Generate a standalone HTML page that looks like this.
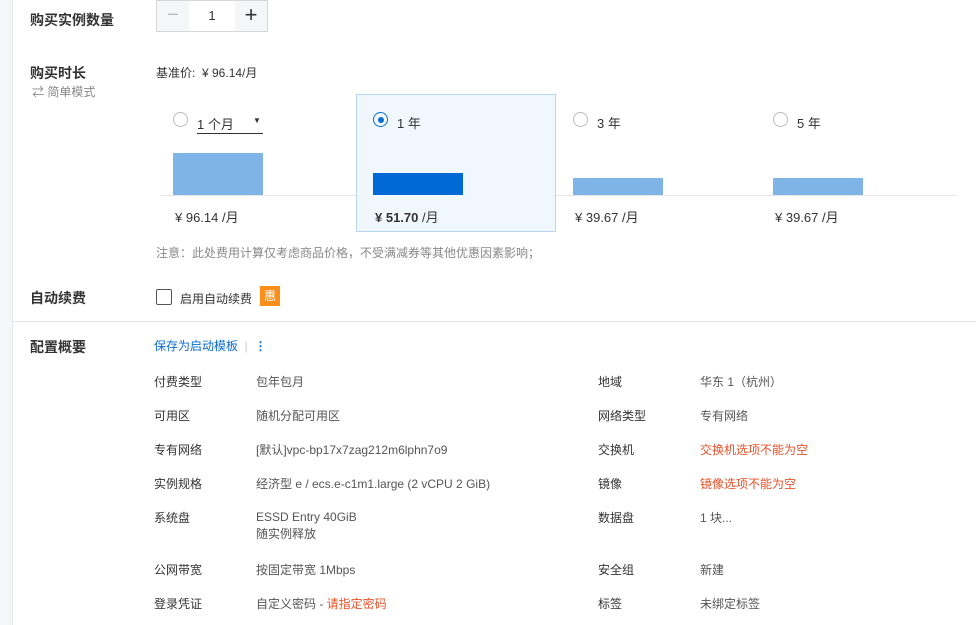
<!DOCTYPE html><html><head><meta charset="utf-8"><style>
body{margin:0;width:976px;height:625px;overflow:hidden;background:#fff;font-family:"Liberation Sans","Noto Sans CJK SC",sans-serif;color:#333;font-size:12px;position:relative}
.a{position:absolute;white-space:nowrap}
.lbl{font-size:14px;color:#333;font-weight:600}
.k{color:#333}
.v{color:#555}
.r{color:#e8532a}
</style></head><body>
<div class="a" style="left:0;top:0;width:12px;height:625px;background:#f5f6f7;border-right:1px solid #e6e6e6"></div>
<div class="a lbl" style="left:30px;top:10px">购买实例数量</div>
<div class="a" style="left:156px;top:0px;width:112px;height:32px;border:1px solid #d6d6d6;box-sizing:border-box">
 <div class="a" style="left:0;top:0;width:32px;height:30px;background:#f5f6f7;color:#bbb;font-size:20px;line-height:28px;text-align:center">−</div>
 <div class="a" style="left:32px;top:0;width:46px;height:30px;line-height:30px;text-align:center;font-size:13px">1</div>
 <div class="a" style="left:78px;top:0;width:32px;height:30px;background:#f5f6f7;color:#333;font-size:22px;line-height:28px;text-align:center">+</div>
</div>
<div class="a lbl" style="left:30px;top:63px">购买时长</div>
<div class="a" style="left:32px;top:83px;color:#888">⇄ 简单模式</div>
<div class="a" style="left:156px;top:64px;color:#333">基准价: &nbsp;¥ 96.14/月</div>
<div class="a" style="left:160px;top:195px;width:796px;height:1px;background:#e5e5e5"></div>
<div class="a" style="left:356px;top:94px;width:200px;height:138px;background:#f0f7fe;border:1px solid #b9d6f3;box-sizing:border-box"></div>
<div class="a" style="left:173px;top:112px;width:15px;height:15px;border:1px solid #bbb;border-radius:50%;box-sizing:border-box"></div>
<div class="a" style="left:197px;top:114px;font-size:13px">1 个月</div>
<div class="a" style="left:253px;top:116px;font-size:8px">▼</div>
<div class="a" style="left:197px;top:133px;width:66px;height:1px;background:#333"></div>
<div class="a" style="left:373px;top:112px;width:15px;height:15px;border:1px solid #0a6dd1;border-radius:50%;box-sizing:border-box"><div style="margin:3.5px;width:6px;height:6px;border-radius:50%;background:#0a6dd1"></div></div>
<div class="a" style="left:397px;top:113px;font-size:13px">1 年</div>
<div class="a" style="left:573px;top:112px;width:15px;height:15px;border:1px solid #bbb;border-radius:50%;box-sizing:border-box"></div>
<div class="a" style="left:597px;top:113px;font-size:13px">3 年</div>
<div class="a" style="left:773px;top:112px;width:15px;height:15px;border:1px solid #bbb;border-radius:50%;box-sizing:border-box"></div>
<div class="a" style="left:797px;top:113px;font-size:13px">5 年</div>
<div class="a" style="left:173px;top:153px;width:90px;height:42px;background:#7fb5e6"></div>
<div class="a" style="left:373px;top:173px;width:90px;height:22px;background:#006ad4"></div>
<div class="a" style="left:573px;top:178px;width:90px;height:17px;background:#7fb5e6"></div>
<div class="a" style="left:773px;top:178px;width:90px;height:17px;background:#7fb5e6"></div>
<div class="a" style="left:175px;top:207px;font-size:13px">¥ 96.14 /月</div>
<div class="a" style="left:375px;top:207px;font-size:13px;font-weight:bold">¥ 51.70 <span style="font-weight:normal">/月</span></div>
<div class="a" style="left:575px;top:207px;font-size:13px">¥ 39.67 /月</div>
<div class="a" style="left:775px;top:207px;font-size:13px">¥ 39.67 /月</div>
<div class="a" style="left:156px;top:244px;color:#888">注意：此处费用计算仅考虑商品价格，不受满减券等其他优惠因素影响；</div>
<div class="a lbl" style="left:30px;top:288px">自动续费</div>
<div class="a" style="left:156px;top:289px;width:16px;height:16px;border:1px solid #555;border-radius:2px;box-sizing:border-box"></div>
<div class="a" style="left:180px;top:290px">启用自动续费</div>
<div class="a" style="left:260px;top:286px;width:20px;height:20px;background:#f98e1b;color:#fff;text-align:center;line-height:20px;font-size:12px">惠</div>
<div class="a" style="left:13px;top:321px;width:963px;height:1px;background:#e5e5e5"></div>
<div class="a lbl" style="left:30px;top:337px">配置概要</div>
<div class="a" style="left:154px;top:337px;color:#0a6dd1">保存为启动模板 <span style="color:#ccc">&nbsp;|&nbsp;</span> <b>⋮</b></div>
<div class="a k" style="left:154px;top:373px">付费类型</div><div class="a v" style="left:256px;top:373px">包年包月</div>
<div class="a k" style="left:598px;top:373px">地域</div><div class="a v" style="left:700px;top:373px">华东 1（杭州）</div>
<div class="a k" style="left:154px;top:407px">可用区</div><div class="a v" style="left:256px;top:407px">随机分配可用区</div>
<div class="a k" style="left:598px;top:407px">网络类型</div><div class="a v" style="left:700px;top:407px">专有网络</div>
<div class="a k" style="left:154px;top:441px">专有网络</div><div class="a v" style="left:256px;top:441px">[默认]vpc-bp17x7zag212m6lphn7o9</div>
<div class="a k" style="left:598px;top:441px">交换机</div><div class="a r" style="left:700px;top:441px">交换机选项不能为空</div>
<div class="a k" style="left:154px;top:475px">实例规格</div><div class="a v" style="left:256px;top:475px">经济型 e / ecs.e-c1m1.large (2 vCPU 2 GiB)</div>
<div class="a k" style="left:598px;top:475px">镜像</div><div class="a r" style="left:700px;top:475px">镜像选项不能为空</div>
<div class="a k" style="left:154px;top:509px">系统盘</div><div class="a v" style="left:256px;top:509px;line-height:17px">ESSD Entry 40GiB<br>随实例释放</div>
<div class="a k" style="left:598px;top:509px">数据盘</div><div class="a v" style="left:700px;top:509px">1 块...</div>
<div class="a k" style="left:154px;top:561px">公网带宽</div><div class="a v" style="left:256px;top:561px">按固定带宽 1Mbps</div>
<div class="a k" style="left:598px;top:561px">安全组</div><div class="a v" style="left:700px;top:561px">新建</div>
<div class="a k" style="left:154px;top:595px">登录凭证</div><div class="a v" style="left:256px;top:595px">自定义密码 - <span class="r">请指定密码</span></div>
<div class="a k" style="left:598px;top:595px">标签</div><div class="a v" style="left:700px;top:595px">未绑定标签</div>
</body></html>
